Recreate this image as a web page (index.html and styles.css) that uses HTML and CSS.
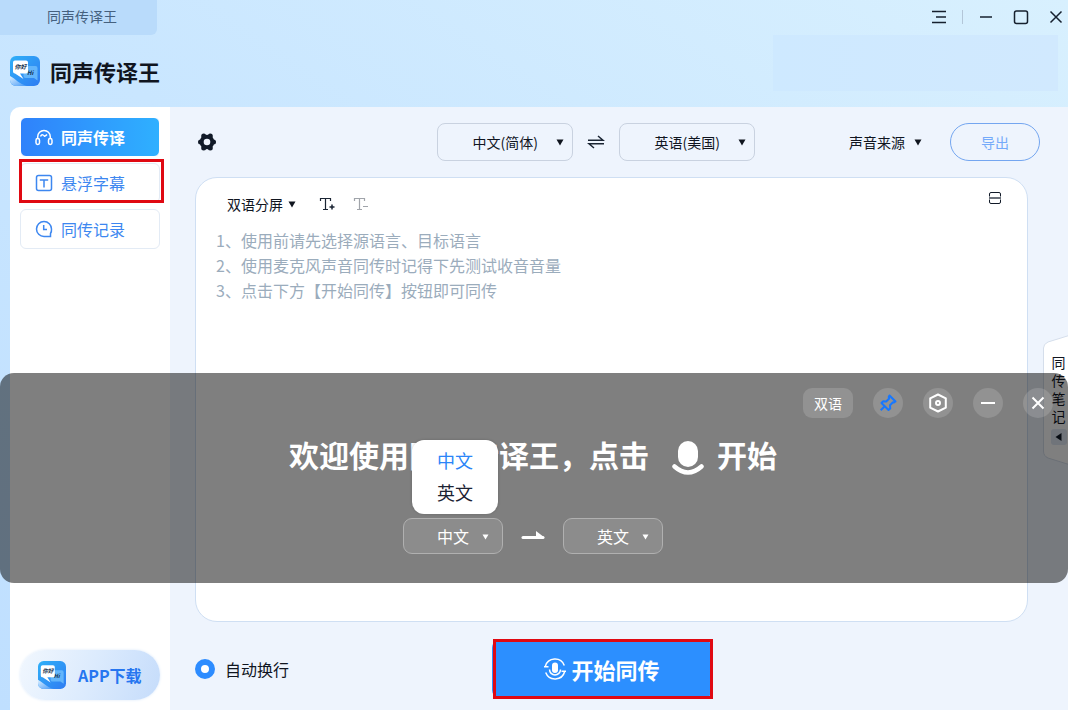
FILE: index.html
```html
<!DOCTYPE html>
<html lang="zh-CN">
<head>
<meta charset="utf-8">
<meta name="viewport" content="width=device-width, initial-scale=1">
<title>同声传译王</title>
<link rel="stylesheet" href="styles.css">
</head>
<body>
<svg class="defs" aria-hidden="true">
  <defs>
    <linearGradient id="logo-bg" x1="0" y1="0" x2="1" y2="1">
      <stop offset="0" stop-color="#2fb0f8"/><stop offset="1" stop-color="#2f7cf2"/>
    </linearGradient>
    <linearGradient id="logo-fold" x1="0" y1="0" x2="1" y2="1">
      <stop offset="0" stop-color="#dff1ff"/><stop offset="1" stop-color="#3f95f6"/>
    </linearGradient>
    <symbol id="logo" viewBox="0 0 30 30">
      <rect width="30" height="30" rx="6" fill="url(#logo-bg)"/>
      <path d="M0 20C6 23 9 28 17 30H6A6 6 0 0 1 0 24z" fill="url(#logo-fold)"/>
      <path d="M17 10h8.500a2 2 0 0 1 2 2v12.500l-3.500-2.500H15.500a2 2 0 0 1-2-2V12z" fill="#62b5fb"/>
      <path d="M5 4.500h11a2 2 0 0 1 2 2v9a2 2 0 0 1-2 2H10l3.500 5.500L5 17.500a2 2 0 0 1-2-2v-9a2 2 0 0 1 2-2z" fill="#fff"/>
      <text class="logo-text" x="4.500" y="13">你好</text>
      <text class="logo-text" x="17" y="18.500">Hi</text>
    </symbol>
    <symbol id="caret" viewBox="0 0 8 7"><path d="M.5 .5h7L4 6.500z" fill="currentColor"/></symbol>
  </defs>
</svg>

<header class="titlebar">
  <div class="tab">同声传译王</div>
  <div class="window-controls">
    <button class="win-btn" aria-label="菜单"><svg width="16" height="16" viewBox="0 0 16 16"><path d="M1 2.500h14M5 8h10M1 13.500h14"/></svg></button>
    <span class="divider"></span>
    <button class="win-btn" aria-label="最小化"><svg width="16" height="16" viewBox="0 0 16 16"><path d="M2 8h12"/></svg></button>
    <button class="win-btn" aria-label="最大化"><svg width="16" height="16" viewBox="0 0 16 16"><rect x="1.500" y="2" width="13" height="12.500" rx="2"/></svg></button>
    <button class="win-btn" aria-label="关闭"><svg width="16" height="16" viewBox="0 0 16 16"><path d="M2.500 2.500l11 11M13.500 2.500l-11 11"/></svg></button>
  </div>
</header>

<div class="brandbar">
  <div class="brand">
    <svg width="30" height="30" aria-hidden="true"><use href="#logo"/></svg>
    <h1 class="brand-name">同声传译王</h1>
  </div>
  <div class="banner"></div>
</div>

<div class="shell">
  <aside class="sidebar">
    <nav class="nav">
      <a class="nav-item active" href="#live">
        <svg class="nav-icon" viewBox="0 0 18 18"><path d="M2.700 11V8.700a6.300 6.300 0 0 1 12.600 0V11M5.500 8.500q1.300-2.300 2.500-1.500t1.500 1.200 2.500-1.700"/><rect x="1" y="10.500" width="3.500" height="6" rx="1.700"/><rect x="13.500" y="10.500" width="3.500" height="6" rx="1.700"/></svg>
        同声传译
      </a>
      <a class="nav-item" href="#captions">
        <svg class="nav-icon" viewBox="0 0 18 18"><rect x="1.500" y="1.500" width="15" height="15" rx="2"/><path d="M4.800 6h8.400M9 6v7.500"/></svg>
        悬浮字幕
        <span class="highlight nav-highlight"></span>
      </a>
      <a class="nav-item" href="#records">
        <svg class="nav-icon" viewBox="0 0 18 18"><path d="M16.500 9A7.500 7.500 0 1 0 9 16.500h6.500v-3A7.500 7.500 0 0 0 16.500 9zM8.700 5v4.500H12"/></svg>
        同传记录
      </a>
    </nav>
    <a class="app-download" href="#app">
      <svg width="28" height="28" aria-hidden="true"><use href="#logo"/></svg>
      APP下载
    </a>
  </aside>

  <main class="main">
    <div class="toolbar">
      <button class="icon-btn" aria-label="设置">
        <svg width="20" height="20" viewBox="0 0 20 20">
          <g fill="#111a28"><circle cx="10" cy="10" r="7.300"/><circle cx="16.500" cy="10" r="2.500"/><circle cx="13.300" cy="15.900" r="2.500"/><circle cx="6.700" cy="15.900" r="2.500"/><circle cx="3.500" cy="10" r="2.500"/><circle cx="6.700" cy="4.100" r="2.500"/><circle cx="13.300" cy="4.100" r="2.500"/></g>
          <circle cx="10" cy="10" r="3.300" fill="#eef4fd"/>
        </svg>
      </button>
      <span class="space-left"></span>
      <div class="langs">
        <div class="select-box">
          <select class="select" aria-label="源语言"><option>中文(简体)</option></select>
          <svg class="caret"><use href="#caret"/></svg>
        </div>
        <button class="icon-btn swap" aria-label="交换语言">
          <svg width="18" height="16" viewBox="0 0 18 16" fill="none" stroke="#1a2433" stroke-width="1.500"><path d="M1 6.300h15L11 2M17 9.700H2l5 4.300"/></svg>
        </button>
        <div class="select-box">
          <select class="select" aria-label="目标语言"><option>英语(美国)</option></select>
          <svg class="caret"><use href="#caret"/></svg>
        </div>
      </div>
      <span class="space-right"></span>
      <div class="actions">
        <button class="text-btn source">声音来源 <svg class="caret-inline"><use href="#caret"/></svg></button>
        <button class="export">导出</button>
      </div>
    </div>

    <section class="card">
      <div class="card-head">
        <div class="card-tools">
          <button class="text-btn split">双语分屏 <svg class="caret-inline"><use href="#caret"/></svg></button>
          <button class="icon-btn" aria-label="放大字号"><svg width="16" height="16" viewBox="0 0 16 16" fill="none" stroke="#1a2433" stroke-width="1.200"><path d="M1.500 5V2.500h10V5M6.500 2.500v11M4 13.500h5"/><path d="M10.500 11h5M13 8.500v5" stroke-width="1.500"/></svg></button>
          <button class="icon-btn" aria-label="缩小字号"><svg width="16" height="16" viewBox="0 0 16 16" fill="none" stroke="#a0a4aa" stroke-width="1.200"><path d="M1.500 5V2.500h10V5M6.500 2.500v11M4 13.500h5M10 10.500h5"/></svg></button>
        </div>
        <button class="icon-btn" aria-label="切换布局"><svg width="14" height="14" viewBox="0 0 14 14" fill="none" stroke="#111a28"><path d="M1.500 5.500V3a1.500 1.500 0 0 1 1.500-1.500h8A1.500 1.500 0 0 1 12.500 3v2.500M1.500 8.500V11A1.500 1.500 0 0 0 3 12.500h8a1.500 1.500 0 0 0 1.500-1.500V8.500"/><path d="M1 7h12" stroke-width="2" stroke="#6b717a"/></svg></button>
      </div>
      <div class="tips">
        <p>1、使用前请先选择源语言、目标语言</p>
        <p>2、使用麦克风声音同传时记得下先测试收音音量</p>
        <p>3、点击下方【开始同传】按钮即可同传</p>
      </div>
    </section>

    <footer class="footer">
      <label class="wrap-option"><input class="radio" type="radio" checked>自动换行</label>
      <button class="start">
        <svg width="24" height="24" viewBox="0 0 24 24" fill="none" stroke="#fff" stroke-width="1.500"><path d="M2.300 9.500A10 10 0 0 1 21.300 8.500M21.700 14.500A10 10 0 0 1 2.700 15.500M1 9.800h4.500M23 14.200h-4.500"/><path d="M6.500 12.500a5.500 5.500 0 0 0 11 0"/><rect x="9" y="5.500" width="6" height="10.500" rx="3" fill="#fff" stroke="none"/></svg>
        开始同传
        <span class="highlight start-highlight"></span>
      </button>
    </footer>
  </main>
</div>

<button class="notes-tab">
  <svg class="notes-shape" viewBox="0 0 25 130" preserveAspectRatio="none" aria-hidden="true"><path d="M26 .5L5 7Q.5 9 .5 13v103q0 5 4.500 7L26 129.500z" fill="#fff" stroke="#d5deeb"/></svg>
  <span class="notes-label">同传笔记</span>
  <span class="notes-arrow"><svg width="7" height="8" viewBox="0 0 7 8"><path d="M6.500 0v8L.5 4z" fill="#111a28"/></svg></span>
</button>

<section class="caption-window" aria-label="悬浮字幕">
  <div class="caption-controls">
    <button class="pill">双语</button>
    <button class="round" aria-label="置顶"><svg width="18" height="18" viewBox="0 0 18 18" stroke="#1677ff"><path d="M10.500 1.500l6 6-1.500 1-1-.2-3 3 .2 3.200-1.700 1.500-7-7L4 7.300l3.200.2 3-3-.5-1.500zM6 12l-4.300 4.300"/></svg></button>
    <button class="round" aria-label="设置"><svg width="20" height="20" viewBox="0 0 20 20" stroke="#fff"><path d="M10 1.500l7.800 3.800v9.400L10 18.500l-7.800-3.800V5.300z"/><circle cx="10" cy="10" r="2" /></svg></button>
    <button class="round" aria-label="最小化"><svg width="16" height="16" viewBox="0 0 16 16" stroke="#fff"><path d="M1 8h14"/></svg></button>
    <button class="round" aria-label="关闭"><svg width="16" height="16" viewBox="0 0 16 16" stroke="#fff"><path d="M2.500 2.500l11 11M13.500 2.500l-11 11"/></svg></button>
  </div>
  <p class="welcome">
    <span>欢迎使用同声传译王，点击</span>
    <svg width="32" height="36" viewBox="0 0 32 36" fill="#fff" aria-label="麦克风"><rect x="6" y="1" width="20" height="26" rx="10"/><path d="M2.500 26.500Q16 38.500 29.500 26.500" fill="none" stroke="#fff" stroke-width="4.500" stroke-linecap="round"/></svg>
    <span>开始</span>
  </p>
  <div class="caption-langs">
    <div class="caption-box">
      <select class="caption-select" aria-label="字幕源语言"><option>中文</option><option>英文</option></select>
      <svg class="caption-caret"><use href="#caret"/></svg>
      <div class="menu" role="listbox" aria-label="字幕源语言">
        <button class="menu-item selected" role="option" aria-selected="true">中文</button>
        <button class="menu-item" role="option" aria-selected="false">英文</button>
      </div>
    </div>
    <svg width="24" height="12" viewBox="0 0 24 12" aria-hidden="true"><path d="M2 7.500h20" stroke="#fff" stroke-width="3" stroke-linecap="round"/><path d="M15 1l8.500 6.500H15z" fill="#fff"/></svg>
    <div class="caption-box">
      <select class="caption-select" aria-label="字幕目标语言"><option>英文</option></select>
      <svg class="caption-caret"><use href="#caret"/></svg>
    </div>
  </div>
</section>
</body>
</html>
```

FILE: styles.css
```css
* { box-sizing: border-box; }

body {
  position: relative;
  display: flex;
  flex-direction: column;
  min-height: 100vh;
  margin: 0;
  overflow-x: hidden;
  background: linear-gradient(to top right, #bfdfff 0%, #c9e6ff 50%, #d8f0fe 100%);
  color: #10151f;
  font-family: "Noto Sans CJK SC", "Noto Sans", sans-serif;
  font-size: 14px;
  line-height: 20px;
}

button, select, input { font: inherit; color: inherit; margin: 0; }
button { padding: 0; border: 0; background: none; cursor: pointer; }
a { text-decoration: none; }
p, h1 { margin: 0; }
svg { display: block; flex: none; }
.defs { position: absolute; width: 0; height: 0; }
.logo-text { font-size: 6px; font-style: italic; font-weight: 700; fill: #16314f; }

/* Title bar */
.titlebar { display: flex; justify-content: space-between; height: 35px; }
.tab {
  width: 157px;
  padding: 6px 0 0 47px;
  border-radius: 0 0 6px 0;
  background: #b9dbfb;
  color: #45617f;
}
.window-controls { display: flex; align-items: center; gap: 19px; padding: 0 4px 1px 0; }
.win-btn svg { fill: none; stroke: #16202e; stroke-width: 1.5; }
.divider { width: 1px; height: 14px; margin: 0 -4px; background: #b3c6d8; }

/* Brand row */
.brandbar { display: flex; justify-content: space-between; align-items: flex-start; height: 72px; padding: 0 10px; }
.brand { display: flex; align-items: center; gap: 10px; padding-top: 21px; }
.brand-name { font-size: 22px; line-height: 30px; font-weight: 700; }
.banner { width: 285px; height: 56px; background: linear-gradient(90deg, #cee9ff, #d1e9fe); }

/* Shell */
.shell { display: flex; flex: 1; padding-left: 10px; }
.sidebar {
  display: flex;
  flex-direction: column;
  justify-content: space-between;
  width: 160px;
  padding: 10px 10px 10px;
  border-radius: 10px 0 0 0;
  background: #fff;
}
.nav { display: flex; flex-direction: column; gap: 6px; }
.nav-item {
  position: relative;
  display: flex;
  align-items: center;
  gap: 8px;
  height: 40px;
  padding-left: 14px;
  border: 1px solid #e3ebf5;
  border-radius: 6px;
  color: #3d87f0;
  font-size: 16px;
}
.nav-item.active { border-color: #fff; background: linear-gradient(90deg, #2f82fb, #2fb0ff); color: #fff; font-weight: 700; }
.nav-icon { width: 18px; height: 18px; fill: none; stroke: currentColor; stroke-width: 1.5; }
.highlight { position: absolute; border: 3px solid #e00912; }
.nav-highlight { inset: -5px -5px -1px -2px; }
.app-download {
  display: flex;
  align-items: center;
  gap: 12px;
  height: 50px;
  padding-left: 18px;
  border-radius: 25px;
  background: linear-gradient(110deg, #f1f7fe 0%, #dcebfd 50%, #c5dcfb 100%);
  box-shadow: 0 0 3px #dbe9fa;
  color: #2676f0;
  font-size: 16px;
  font-weight: 700;
}

/* Main */
.main { display: flex; flex: 1; flex-direction: column; min-width: 0; padding: 16px 28px 12px 25px; background: #eef4fd; }
.toolbar { display: flex; align-items: center; height: 38px; }
.space-left { flex: 7; }
.space-right { flex: 3; }
.langs { display: flex; align-items: center; gap: 14px; }
.icon-btn { display: grid; place-items: center; }
.toolbar > .icon-btn { width: 24px; height: 24px; }
.select-box, .caption-box { position: relative; }
.select {
  appearance: none;
  width: 136px;
  height: 38px;
  padding: 0 20px 0 34px;
  border: 1px solid #c9d2e0;
  border-radius: 8px;
  background: #eef4fd;
}
.caret { position: absolute; top: 16px; right: 9px; width: 8px; height: 7px; pointer-events: none; }
.caret-inline { width: 8px; height: 7px; }
.actions { display: flex; align-items: center; gap: 28px; }
.text-btn { display: flex; align-items: center; gap: 9px; }
.text-btn.split { gap: 5px; }
.export { width: 90px; height: 38px; border: 1px solid #74a6f0; border-radius: 19px; color: #74aafa; }

.card {
  flex: 1;
  margin: 16px 12px 0 0;
  padding: 13px 25px 20px 20px;
  border: 1px solid #cfdff3;
  border-radius: 22px;
  background: #fff;
}
.toolbar { margin-right: 0; }
.card-head { display: flex; justify-content: space-between; align-items: flex-start; height: 37px; }
.card-tools { display: flex; align-items: center; gap: 18px; padding: 3px 0 0 11px; }
.card-tools .split { margin-right: 5px; }
.tips { color: #9bacbc; font-size: 16px; line-height: 25px; }

.footer { display: grid; grid-template-columns: 1fr auto 1fr; align-items: center; padding: 18px 32px 0 0; }
.wrap-option { display: flex; align-items: center; gap: 10px; font-size: 16px; }
.radio { appearance: none; width: 20px; height: 20px; border: 6px solid #2d8cff; border-radius: 50%; background: #fff; }
.start {
  position: relative;
  display: flex;
  align-items: center;
  justify-content: center;
  gap: 4px;
  width: 220px;
  height: 58px;
  border-radius: 8px;
  background: #2c8fff;
  color: #fff;
  font-size: 22px;
  font-weight: 700;
}
.start-highlight { inset: -1px -1px -1px 1px; }

/* Side notes tab */
.notes-tab {
  position: absolute;
  top: 335px;
  right: 0;
  display: flex;
  flex-direction: column;
  align-items: center;
  gap: 4px;
  width: 25px;
  height: 130px;
  padding: 18px 0 0 6px;
}
.notes-shape { position: absolute; inset: 0; width: 100%; height: 100%; }
.notes-label { position: relative; width: 14px; line-height: 18px; }
.notes-arrow { position: relative; display: grid; place-items: center; width: 16px; height: 16px; border-radius: 3px; background: #e0e8f5; }

/* Floating caption window */
.caption-window {
  position: absolute;
  top: 373px;
  left: 0;
  right: 0;
  display: flex;
  flex-direction: column;
  height: 210px;
  padding-top: 15px;
  border-radius: 14px;
  background: rgba(0, 0, 0, .5);
  color: #fff;
}
.caption-controls { display: flex; justify-content: flex-end; gap: 20px; padding-right: 15px; }
.pill { width: 50px; height: 30px; border-radius: 9px; background: rgba(255, 255, 255, .15); }
.round { display: grid; place-items: center; width: 30px; height: 30px; border-radius: 50%; background: rgba(255, 255, 255, .15); }
.round svg { fill: none; stroke-width: 2; stroke-linejoin: round; }
.welcome {
  display: flex;
  align-items: center;
  justify-content: center;
  padding: 14px 2px 0 0;
  font-size: 30px;
  line-height: 44px;
  font-weight: 700;
}
.welcome svg { margin: 8px 13px 0 23px; }
.caption-langs { display: flex; align-items: center; justify-content: center; gap: 18px; padding: 42px 2px 0 0; }
.caption-select {
  display: block;
  appearance: none;
  width: 100px;
  height: 36px;
  padding: 0 16px 0 33px;
  border: 1px solid #b0b0b0;
  border-radius: 9px;
  background: #8c8c8c;
  font-size: 16px;
}
.caption-caret { position: absolute; top: 16px; right: 14px; width: 7px; height: 6px; pointer-events: none; }
.menu {
  position: absolute;
  bottom: 40px;
  left: 9px;
  display: flex;
  flex-direction: column;
  width: 86px;
  padding: 4px 0 6px;
  border-radius: 12px;
  background: #fff;
  box-shadow: 0 0 3px rgba(0, 0, 0, .2);
}
.menu-item { height: 32px; color: #1c2333; font-size: 18px; }
.menu-item.selected { color: #2b85f8; }
```
